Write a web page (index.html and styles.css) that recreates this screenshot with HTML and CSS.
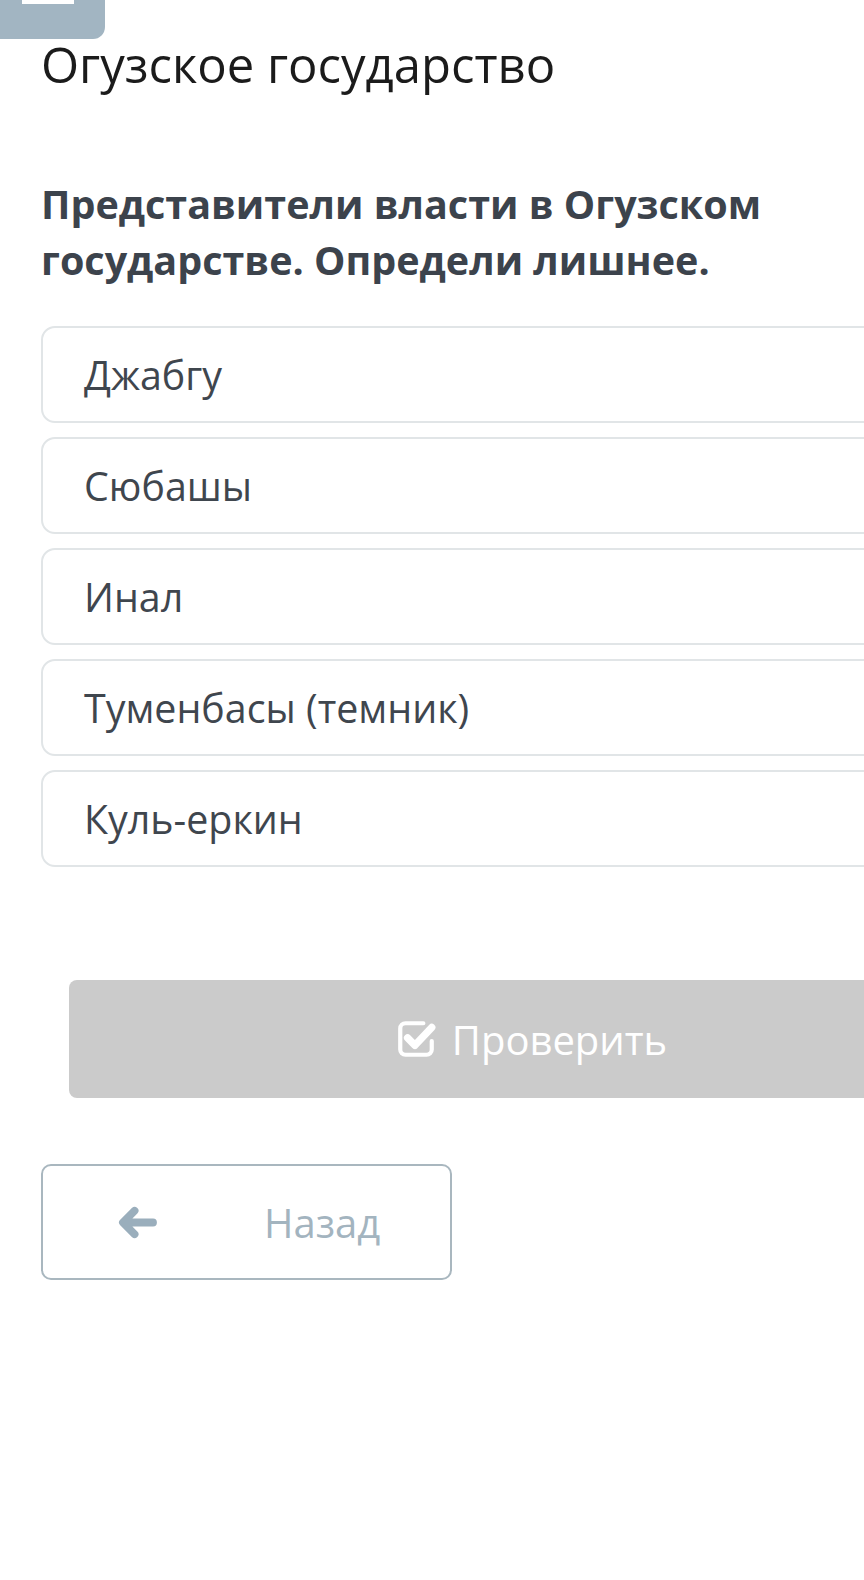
FILE: index.html
```html
<!DOCTYPE html>
<html lang="ru">
<head>
<meta charset="utf-8">
<title>Огузское государство</title>
<link rel="stylesheet" href="styles.css">
</head>
<body>
<div class="viewport">
  <div class="tab"><span class="tab-bar"></span></div>
  <main class="page">
    <h1 class="title">Огузское государство</h1>
    <p class="question">Представители власти в Огузском государстве. Определи лишнее.</p>
    <ul class="options">
      <li class="option">Джабгу</li>
      <li class="option">Сюбашы</li>
      <li class="option">Инал</li>
      <li class="option">Туменбасы (темник)</li>
      <li class="option">Куль-еркин</li>
    </ul>
    <div class="check-wrap">
      <button class="check-btn" type="button">
        <svg class="check-icon" viewBox="0 0 40 40" width="42" height="42" aria-hidden="true">
          <path d="M27 5 H10 a5 5 0 0 0 -5 5 V30 a5 5 0 0 0 5 5 H30 a5 5 0 0 0 5 -5 V22" fill="none" stroke="#fff" stroke-width="4" stroke-linecap="round"/>
          <path d="M12 19 L19 26 L35 9" fill="none" stroke="#fff" stroke-width="7" stroke-linecap="round" stroke-linejoin="round"/>
        </svg>
        <span>Проверить</span>
      </button>
    </div>
    <button class="back-btn" type="button">
      <svg class="back-icon" viewBox="0 0 40 34" width="39" height="33" aria-hidden="true">
        <path d="M36 17 H6 M17 5 L5 17 L17 29" fill="none" stroke="#9aaebc" stroke-width="8" stroke-linecap="round" stroke-linejoin="round"/>
      </svg>
      <span>Назад</span>
    </button>
  </main>
</div>
</body>
</html>
```

FILE: styles.css
```css
html, body {
  margin: 0;
  padding: 0;
  background: #ffffff;
}

body {
  width: 864px;
  overflow: hidden;
  font-family: "Open Sans", "Noto Sans", sans-serif;
}

.viewport {
  width: 1100px;
}

.tab {
  width: 105px;
  height: 39px;
  background: #a2b5c2;
  border-radius: 0 0 12px 0;
  display: flex;
  justify-content: flex-start;
}

.tab-bar {
  display: block;
  width: 52px;
  height: 4px;
  margin-left: 22px;
  background: #ffffff;
}

.page {
  padding-left: 41px;
  width: 980px;
}

.title {
  margin: 1px 0 0 0;
  font-size: 49px;
  line-height: 48px;
  font-weight: 400;
  color: #1b1b1b;
}

.question {
  margin: 88px 0 0 0;
  font-size: 39.5px;
  line-height: 56px;
  font-weight: 700;
  color: #3c434c;
  width: 800px;
}

.options {
  list-style: none;
  margin: 38px 0 0 0;
  padding: 0;
  display: flex;
  flex-direction: column;
  gap: 14px;
}

.option {
  box-sizing: border-box;
  height: 97px;
  border: 2px solid #e1e5e7;
  border-radius: 14px;
  padding-left: 41px;
  display: flex;
  align-items: center;
  font-size: 39.4px;
  color: #3f464e;
}

.check-wrap {
  margin-top: 113px;
  padding: 0 28px;
}

.check-btn {
  width: 100%;
  height: 118px;
  border: none;
  border-radius: 8px;
  background: #cbcbcb;
  color: #ffffff;
  font-family: inherit;
  font-size: 40px;
  display: flex;
  align-items: center;
  justify-content: center;
  gap: 15px;
  padding: 0;
}

.check-icon {
  display: block;
}

.back-btn {
  margin-top: 66px;
  box-sizing: border-box;
  width: 411px;
  height: 116px;
  border: 2px solid #a9b7bf;
  border-radius: 10px;
  background: #ffffff;
  color: #a3b4bf;
  font-family: inherit;
  font-size: 40px;
  display: flex;
  align-items: center;
  padding: 0 0 0 75px;
  gap: 107px;
}

.back-icon {
  display: block;
}
```
